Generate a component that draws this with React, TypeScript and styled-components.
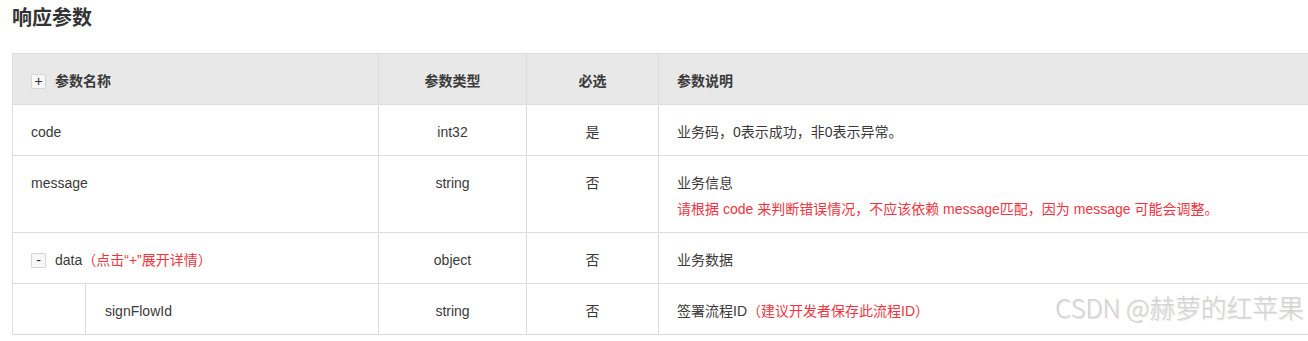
import React from "react";
import styled, { createGlobalStyle } from "styled-components";

const GlobalStyle = createGlobalStyle`
  html, body {
    margin: 0;
    padding: 0;
    background: #ffffff;
    overflow: hidden;
  }
  body {
    font-family: "Liberation Sans", "Noto Sans CJK SC", sans-serif;
    font-size: 14px;
    color: #3a3a3a;
  }
`;

const Page = styled.div`
  position: relative;
  width: 1308px;
  height: 341px;
  overflow: hidden;
  padding: 0 0 0 12px;
  box-sizing: border-box;
`;

const Title = styled.h2`
  margin: 0 0 20px 0;
  font-size: 20px;
  line-height: 33px;
  font-weight: 700;
  color: #333333;
  font-family: "Noto Sans CJK SC", sans-serif;
`;

const Table = styled.div`
  width: 1330px;
  border-top: 1px solid #dcdcdc;
  border-left: 1px solid #dcdcdc;
`;

const Row = styled.div<{ $head?: boolean }>`
  display: grid;
  grid-template-columns: 366px 148px 132px 683px;
  background: ${(p) => (p.$head ? "#e8e8e8" : "#ffffff")};
  font-weight: ${(p) => (p.$head ? 700 : 400)};
`;

const Cell = styled.div<{ $center?: boolean; $flush?: boolean }>`
  box-sizing: border-box;
  border-right: 1px solid #dcdcdc;
  border-bottom: 1px solid #dcdcdc;
  padding: ${(p) => (p.$flush ? "0" : "14px 18px 10px 18px")};
  line-height: 26px;
  text-align: ${(p) => (p.$center ? "center" : "left")};
  display: ${(p) => (p.$flush ? "flex" : "block")};
`;

const Indent = styled.div`
  width: 72px;
  flex: none;
  border-right: 1px solid #dcdcdc;
`;

const SubName = styled.div`
  padding: 14px 19px 10px 19px;
  line-height: 26px;
`;

const NameLine = styled.div`
  display: flex;
  align-items: center;
  gap: 9px;
`;

const ToggleBox = styled.span`
  display: inline-flex;
  align-items: center;
  justify-content: center;
  width: 13px;
  height: 13px;
  border: 1px solid #d6d6d6;
  background: #f7f7f7;
  border-radius: 1px;
  font-size: 14px;
  font-weight: 400;
  line-height: 1;
  color: #333;
`;

const Red = styled.span`
  color: #f0353f;
`;

const RedLine = styled.div`
  color: #f0353f;
`;

const Watermark = styled.div`
  position: absolute;
  left: 1055px;
  top: 292px;
  font-family: "Noto Sans CJK SC", sans-serif;
  font-size: 26px;
  font-weight: 300;
  line-height: 30px;
  letter-spacing: -0.3px;
  color: #d4d4d4;
  text-shadow: 1px 1px 1px rgba(0, 0, 0, 0.12);
  white-space: nowrap;
  pointer-events: none;
`;

export default function App() {
  return (
    <>
      <GlobalStyle />
      <Page>
        <Title>响应参数</Title>
        <Table>
          <Row $head>
            <Cell>
              <NameLine>
                <ToggleBox>+</ToggleBox>
                <span>参数名称</span>
              </NameLine>
            </Cell>
            <Cell $center>参数类型</Cell>
            <Cell $center>必选</Cell>
            <Cell>参数说明</Cell>
          </Row>
          <Row>
            <Cell>code</Cell>
            <Cell $center>int32</Cell>
            <Cell $center>是</Cell>
            <Cell>业务码，0表示成功，非0表示异常。</Cell>
          </Row>
          <Row>
            <Cell>message</Cell>
            <Cell $center>string</Cell>
            <Cell $center>否</Cell>
            <Cell>
              <div>业务信息</div>
              <RedLine>
                请根据 code 来判断错误情况，不应该依赖 message匹配，因为 message 可能会调整。
              </RedLine>
            </Cell>
          </Row>
          <Row>
            <Cell>
              <NameLine>
                <ToggleBox>-</ToggleBox>
                <span>
                  data<Red>（点击“+”展开详情）</Red>
                </span>
              </NameLine>
            </Cell>
            <Cell $center>object</Cell>
            <Cell $center>否</Cell>
            <Cell>业务数据</Cell>
          </Row>
          <Row>
            <Cell $flush>
              <Indent />
              <SubName>signFlowId</SubName>
            </Cell>
            <Cell $center>string</Cell>
            <Cell $center>否</Cell>
            <Cell>
              签署流程ID<Red>（建议开发者保存此流程ID）</Red>
            </Cell>
          </Row>
        </Table>
        <Watermark>CSDN @赫萝的红苹果</Watermark>
      </Page>
    </>
  );
}
